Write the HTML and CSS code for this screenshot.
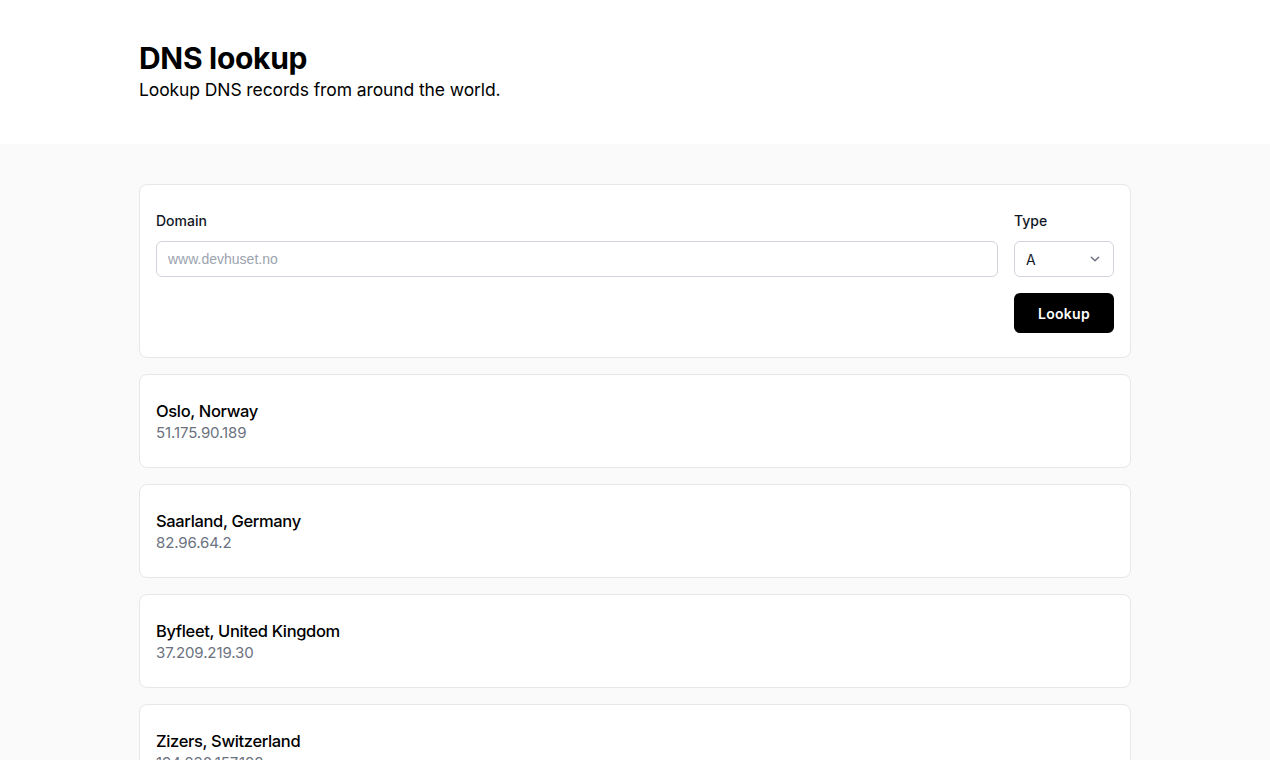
FILE: index.html
```html
<!DOCTYPE html>
<html lang="en">
<head>
<meta charset="utf-8">
<title>DNS lookup</title>
<link rel="stylesheet" href="styles.css">
</head>
<body>
<header class="hero">
  <div class="wrap">
    <h1 class="title">DNS lookup</h1>
    <p class="subtitle">Lookup DNS records from around the world.</p>
  </div>
</header>
<main class="main">
  <div class="wrap stack">
    <form class="card form">
      <div class="fields">
        <div class="field grow">
          <label class="label" for="domain">Domain</label>
          <input class="input" id="domain" type="text" placeholder="www.devhuset.no">
        </div>
        <div class="field side">
          <label class="label" for="type">Type</label>
          <div class="select">
            <span>A</span>
            <svg class="chev" width="18" height="18" viewBox="0 0 20 20" fill="none" stroke="#6b7280" stroke-width="1.6" stroke-linecap="round" stroke-linejoin="round"><path d="M6 8l4 4 4-4"/></svg>
          </div>
        </div>
      </div>
      <div class="actions">
        <button class="btn" type="button">Lookup</button>
      </div>
    </form>
    <div class="card result">
      <div class="loc">Oslo, Norway</div>
      <div class="ip">51.175.90.189</div>
    </div>
    <div class="card result">
      <div class="loc">Saarland, Germany</div>
      <div class="ip">82.96.64.2</div>
    </div>
    <div class="card result">
      <div class="loc">Byfleet, United Kingdom</div>
      <div class="ip">37.209.219.30</div>
    </div>
    <div class="card result">
      <div class="loc">Zizers, Switzerland</div>
      <div class="ip">194.230.157.188</div>
    </div>
  </div>
</main>
</body>
</html>
```

FILE: styles.css
```css
* { box-sizing: border-box; }
html, body { margin: 0; padding: 0; }
body {
  font-family: Inter, "Liberation Sans", sans-serif;
  color: #000;
  background: #fafafa;
}
.wrap {
  max-width: 992px;
  margin: 0 auto;
}
.hero {
  background: #fff;
  padding: 40px 0;
}
.title {
  margin: 0;
  font-size: 30px;
  line-height: 36px;
  font-weight: 700;
  letter-spacing: -0.3px;
}
.subtitle {
  margin: 0;
  font-size: 17.5px;
  line-height: 28px;
  letter-spacing: -0.1px;
}
.main {
  padding: 40px 0;
}
.stack {
  display: flex;
  flex-direction: column;
  gap: 16px;
}
.card {
  background: #fff;
  border: 1px solid #e5e7eb;
  border-radius: 8px;
}
.form {
  margin: 0;
  padding: 26px 16px 24px;
  display: flex;
  flex-direction: column;
  gap: 16px;
}
.fields {
  display: flex;
  gap: 16px;
}
.field {
  display: flex;
  flex-direction: column;
  gap: 10px;
}
.grow { flex: 1; }
.side { width: 100px; }
.label {
  font-size: 14px;
  line-height: 20px;
  font-weight: 500;
  color: #111827;
}
.input {
  height: 36px;
  border: 1px solid #d1d5db;
  border-radius: 6px;
  padding: 0 11px;
  font-family: "Liberation Sans", Arial, sans-serif;
  font-size: 14px;
  color: #111827;
  background: #fff;
  outline: none;
}
.input::placeholder { color: #9ca3af; }
.select {
  height: 36px;
  border: 1px solid #d1d5db;
  border-radius: 6px;
  padding: 0 9px 0 11px;
  display: flex;
  align-items: center;
  justify-content: space-between;
  font-size: 14px;
  color: #111827;
  background: #fff;
}
.chev { display: block; }
.actions {
  display: flex;
  justify-content: flex-end;
}
.btn {
  width: 100px;
  height: 40px;
  border: 0;
  border-radius: 6px;
  background: #000;
  color: #fff;
  font-family: Inter, "Liberation Sans", sans-serif;
  font-size: 14px;
  font-weight: 600;
  letter-spacing: 0.3px;
}
.result {
  padding: 24px 16px;
}
.loc {
  font-size: 16.5px;
  line-height: 24px;
  font-weight: 500;
  letter-spacing: -0.35px;
}
.ip {
  font-size: 15px;
  line-height: 20px;
  color: #6b7280;
  letter-spacing: -0.1px;
}
```
